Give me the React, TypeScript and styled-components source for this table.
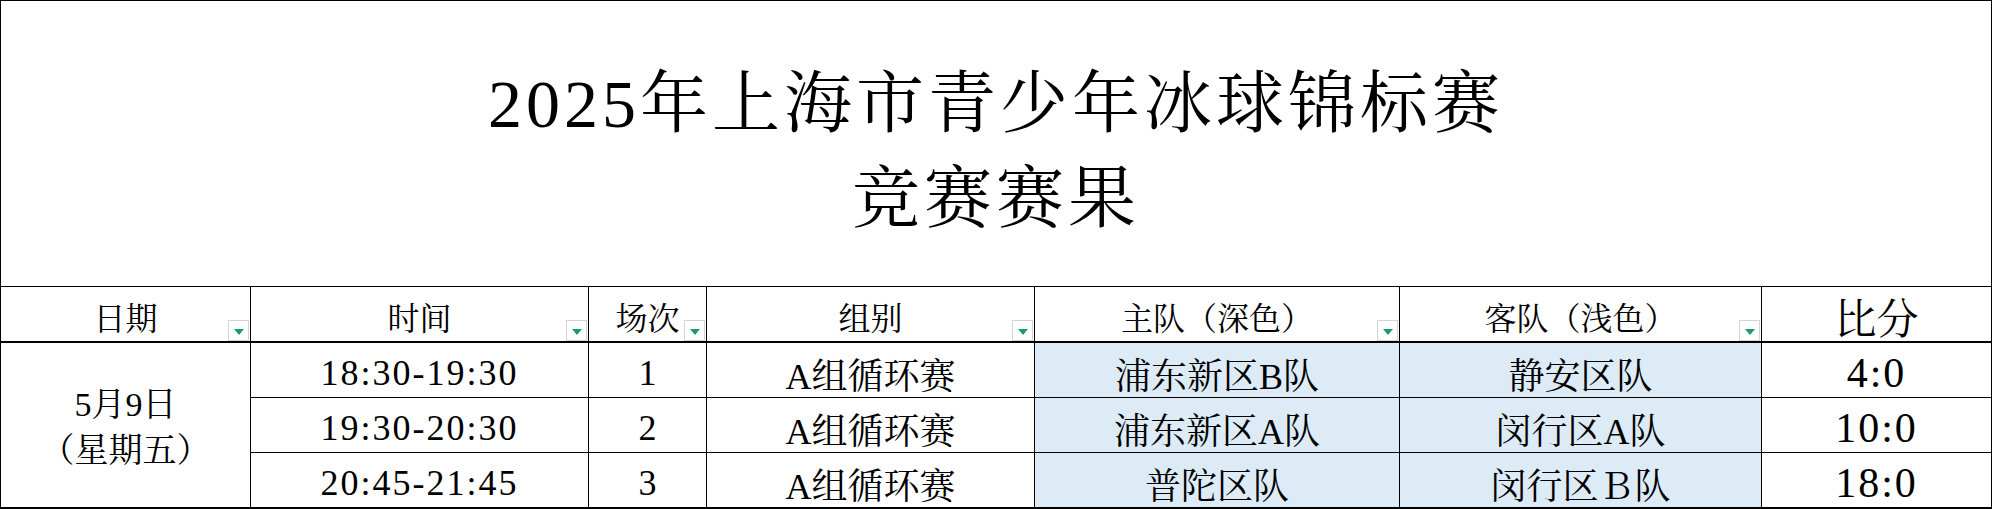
import styled, { createGlobalStyle } from 'styled-components';

const GlobalStyle = createGlobalStyle`
  html, body {
    margin: 0;
    padding: 0;
    background: #fff;
  }
  body {
    font-family: "Liberation Serif", "Noto Serif CJK SC", "Noto Sans CJK SC", serif;
    color: #000;
  }
`;

const Sheet = styled.div`
  display: grid;
  grid-template-columns: 250px 338px 118px 328px 365px 362px 230px;
  grid-template-rows: 286px 56px 55px 55px 56px;
  width: max-content;
  border-top: 1px solid #000;
  border-left: 1px solid #000;
`;

const Cell = styled.div`
  box-sizing: border-box;
  display: flex;
  align-items: center;
  justify-content: center;
  border-right: 1px solid #000;
  border-bottom: 1px solid #000;
  white-space: nowrap;
`;

const TitleCell = styled(Cell)`
  grid-column: 1 / -1;
  flex-direction: column;
  font-size: 68px;
  line-height: 95px;
  letter-spacing: 4px;
  padding-top: 16px;
`;

type HeaderCellProp = {
  $size?: number;
};

const HeaderCell = styled(Cell)<HeaderCellProp>`
  position: relative;
  font-size: ${(props) => props.$size || 32}px;
  padding-top: 4px;
  border-bottom-width: 2px;
`;

const FilterButton = styled.div`
  position: absolute;
  right: 1px;
  bottom: 0;
  width: 21px;
  height: 21px;
  box-sizing: border-box;
  border: 1px solid #d4d4d4;
  background: #fff;
  display: flex;
  align-items: center;
  justify-content: center;

  &::after {
    content: '';
    width: 0;
    height: 0;
    border-left: 5px solid transparent;
    border-right: 5px solid transparent;
    border-top: 6px solid #1e9a69;
    margin-top: 2px;
  }
`;

const DateCell = styled(Cell)`
  grid-row: span 3;
  flex-direction: column;
  font-size: 34px;
  line-height: 46px;
  padding-top: 6px;
  border-bottom-width: 2px;
`;

type BodyCellProp = {
  $fill?: boolean;
  $last?: boolean;
  $size?: number;
  $spaced?: boolean;
};

const BodyCell = styled(Cell)<BodyCellProp>`
  font-size: ${(props) => props.$size || 36}px;
  background: ${(props) => (props.$fill ? '#ddebf7' : '#fff')};
  border-bottom-width: ${(props) => (props.$last ? 2 : 1)}px;
  letter-spacing: ${(props) => (props.$spaced ? '2px' : '0')};
  padding-top: 6px;
`;

const headers = [
  { label: '日期', filter: true },
  { label: '时间', filter: true },
  { label: '场次', filter: true },
  { label: '组别', filter: true },
  { label: '主队（深色）', filter: true },
  { label: '客队（浅色）', filter: true },
  { label: '比分', filter: false, size: 42 },
];

const matches = [
  { time: '18:30-19:30', no: '1', group: 'A组循环赛', home: '浦东新区B队', away: '静安区队', score: '4:0' },
  { time: '19:30-20:30', no: '2', group: 'A组循环赛', home: '浦东新区A队', away: '闵行区A队', score: '10:0' },
  { time: '20:45-21:45', no: '3', group: 'A组循环赛', home: '普陀区队', away: '闵行区Ｂ队', score: '18:0' },
];

export default function App() {
  return (
    <>
      <GlobalStyle />
      <Sheet>
        <TitleCell>
          <div>2025年上海市青少年冰球锦标赛</div>
          <div>竞赛赛果</div>
        </TitleCell>

        {headers.map((h) => (
          <HeaderCell key={h.label} $size={h.size}>
            {h.label}
            {h.filter && <FilterButton />}
          </HeaderCell>
        ))}

        {matches.map((m, i) => {
          const last = i === matches.length - 1;
          return [
            i === 0 ? (
              <DateCell key="date">
                <div>5月9日</div>
                <div>（星期五）</div>
              </DateCell>
            ) : null,
            <BodyCell key={`t${i}`} $last={last} $spaced>
              {m.time}
            </BodyCell>,
            <BodyCell key={`n${i}`} $last={last}>
              {m.no}
            </BodyCell>,
            <BodyCell key={`g${i}`} $last={last}>
              {m.group}
            </BodyCell>,
            <BodyCell key={`h${i}`} $last={last} $fill>
              {m.home}
            </BodyCell>,
            <BodyCell key={`a${i}`} $last={last} $fill>
              {m.away}
            </BodyCell>,
            <BodyCell key={`s${i}`} $last={last} $size={42} $spaced>
              {m.score}
            </BodyCell>,
          ];
        })}
      </Sheet>
    </>
  );
}
